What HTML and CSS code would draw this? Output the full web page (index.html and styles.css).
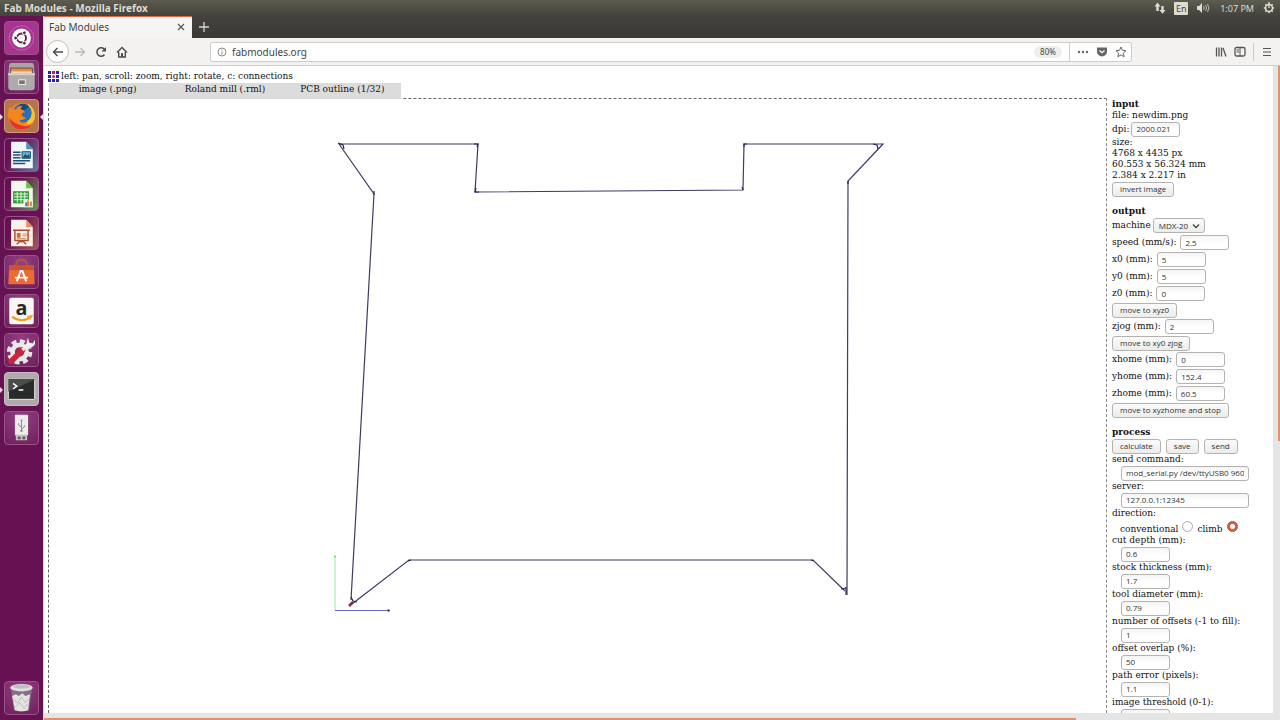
FILE: index.html
```html
<!DOCTYPE html>
<html lang="en">
<head>
<meta charset="utf-8">
<title>Fab Modules</title>
<link rel="stylesheet" href="styles.css">
</head>
<body>
<header class="panel">
  <span class="panel-title">Fab Modules - Mozilla Firefox</span>
  <div class="indicators">
    <svg width="12" height="12" viewBox="0 0 12 12" fill="#dfdbd2"><path d="M3.500 0.500 6.500 4.500H4.700V9H2.300V4.500H0.500zM8.500 11.800 5.500 8h1.800V4h2.400v4H11.500z"/></svg>
    <span class="lang">En</span>
    <svg width="14" height="12" viewBox="0 0 14 12" fill="#dfdbd2"><path d="M1 4h2l3-3v10L3 8H1z"/><path d="M7.500 4q1.500 2 0 4M9.500 3q2.200 3 0 6M11.500 2q2.800 4 0 8" fill="none" stroke="#bcb8b0"/></svg>
    <time class="clock">1:07 PM</time>
    <svg width="12" height="12" viewBox="0 0 12 12" fill="none" stroke="#dfdbd2"><circle cx="6" cy="6" r="3.500" stroke-width="1.500"/><path d="M6 0v6M0.800 6h2M9.200 6h2M2.300 2.300l1.400 1.400M9.700 2.300 8.300 3.700M2.300 9.700l1.400-1.400M9.700 9.700 8.300 8.300M6 9.300v2" stroke-width="1.400"/></svg>
  </div>
</header>
<div class="desktop">
  <nav class="launcher" aria-label="Launcher">
    <button class="tile dash" aria-label="Dash"><svg viewBox="0 0 34 34"><circle cx="17" cy="17" r="13" fill="none" stroke="#d694c9" opacity=".5"/><circle cx="17" cy="17" r="10" fill="#fff"/><circle cx="17" cy="17" r="4.800" fill="none" stroke="#5a1a4b" stroke-width="2"/><g fill="#5a1a4b" stroke="#fff"><circle cx="10.800" cy="17" r="2"/><circle cx="20" cy="11.500" r="2"/><circle cx="20" cy="22.500" r="2"/></g></svg></button>
    <button class="tile" aria-label="Files"><svg viewBox="0 0 34 34"><path d="M4 4q0-2 2-2h22q2 0 2 2l1 12H3z" fill="#aaa6a3"/><path d="M5 7h24v8H5z" fill="#5c4a40"/><path d="M6 8h22v6H6z" fill="#e58b4c"/><path d="M6 11h22v2H6z" fill="#f7d6b3"/><path d="M3 13h28v15q0 3-3 3H6q-3 0-3-3z" fill="#aeabaa"/><path d="M3 13h28v2H3z" fill="#d6d4d3"/><rect x="14" y="20" width="7" height="5" fill="#777" stroke="#f4f4f4"/></svg></button>
    <button class="tile firefox running focused" aria-label="Firefox"><svg viewBox="0 0 34 34"><circle cx="17" cy="17" r="14" fill="#f57c16"/><path d="M24 4q8 6 7 14-1 10-10 12l3-9z" fill="#ffd83b"/><circle cx="18" cy="14" r="10" fill="#2870b8"/><path d="M15 5q5-3 10 2l-5 4-5-2z" fill="#184783"/><path d="M4 7q-3 10 1 17 6 9 16 7 8-2 10-11-4 7-10 6-5-1-6-5 4 1 7-2-4-1-5-3 0-3 4-3-2-3-5-3 0-2 2-4-5 0-7 4-3-1-4 0-2-1-3-3" fill="#f5861d"/><path d="M4 19q1 9 10 12 10 1 14-5-5 3-11 1-8-2-13-8" fill="#e4332b"/><path d="M24 4q4 4 4 10-1 9-8 12 9-1 11-9 0-8-7-13" fill="#fbc12d"/></svg></button>
    <button class="tile doc" aria-label="Writer"><svg viewBox="0 0 34 34"><path d="M6 3h16l7 8v20H6z" fill="#f1f6f9"/><path d="M22 3v8h7z" fill="#4b92ba"/><path d="M8 14h8M8 17h8M8 20h8M8 23h18M8 26h13" stroke="#1e5275" stroke-width="1.600"/><path d="M17.500 13.500h9v7h-9z" fill="#6cb2d6" stroke="#174a70"/><path d="m18 20 3-4 2 2 2-2 1 4z" fill="#174a70"/></svg></button>
    <button class="tile sheet" aria-label="Calc"><svg viewBox="0 0 34 34"><path d="M6 3h16l7 8v20H6z" fill="#f3faed"/><path d="M22 3v8h7z" fill="#68c23b"/><path d="M8 14h17v13H8z" fill="#30a13a"/><path d="M9 17h15M9 20h15M9 23h15M12.500 15v11M16.500 15v11M20.500 15v11" stroke="#eafbe4"/><path d="M19 23h10v8H19z" fill="#eff4e8"/><path d="M21 30v-4h2v4z" fill="#367ab1"/><path d="M23 30v-6h2v6z" fill="#dc7c38"/><path d="M26 30v-5h2v5z" fill="#bd9038"/></svg></button>
    <button class="tile slides" aria-label="Impress"><svg viewBox="0 0 34 34"><path d="M6 3h16l7 8v20H6z" fill="#fbf1ea"/><path d="M22 3v8h7z" fill="#e39164"/><path d="M8 14h18M10 15v10h14V15M17 25v2M12 29l3-3h4l3 3" fill="none" stroke="#a74d2d" stroke-width="1.500"/><path d="M12 17h4v5h-4z" fill="#c86b3d"/><path d="M18 18h5M18 20h5M12 23h10" stroke="#da864a"/></svg></button>
    <button class="tile" aria-label="Software"><svg viewBox="0 0 34 34"><path d="M11 10q0-6 6-6t6 6" fill="none" stroke="#b4583a" stroke-width="2"/><path d="M4 10h26l1 20H3z" fill="#ed6a32"/><path d="M4 10h26v5H4z" fill="#c85332"/><path d="m12 27 4-11h2l4 11M10 23h14" fill="none" stroke="#fff" stroke-width="2"/></svg></button>
    <button class="tile" aria-label="Amazon"><svg viewBox="0 0 34 34"><rect x="4" y="3" width="26" height="28" rx="2" fill="#f8f7f5"/><text x="17" y="21" text-anchor="middle" class="amazon-letter">a</text><path d="M7 23q9 7 19 1" fill="none" stroke="#e7a124" stroke-width="2.200"/><path d="m23 23 5-1-2 4" fill="none" stroke="#e7a124" stroke-width="1.500"/></svg></button>
    <button class="tile" aria-label="Settings"><svg viewBox="0 0 34 34"><circle cx="15" cy="19" r="11" fill="none" stroke="#e7e3e4" stroke-width="5" stroke-dasharray="5 3.640"/><circle cx="15" cy="19" r="7.500" fill="#8b2a63" stroke="#ece9e9" stroke-width="5"/><path d="m6 29 12-12" stroke="#c9263d" stroke-width="6" stroke-linecap="round"/><path d="m18 17 6-6" stroke="#f1eff0" stroke-width="3.500"/><path d="M31 6q2 8-5 8-6-2-2-10l1 5 4 1z" fill="#f5f4f4"/></svg></button>
    <button class="tile terminal running" aria-label="Terminal"><svg viewBox="0 0 34 34"><rect x="3" y="6" width="28" height="22" rx="1" fill="#292b2b" stroke="#efefed"/><path d="m3 6h28v1L3 20z" fill="#4b4d4b"/><path d="m8 11 4 3-4 3M14 18h5" fill="none" stroke="#fff" stroke-width="1.600"/></svg></button>
    <button class="tile" aria-label="USB drive"><svg viewBox="0 0 34 34"><rect x="10" y="3" width="14" height="22" rx="1" fill="#eeecec"/><path d="M11 24h12v6H11z" fill="#c6c2c5"/><path d="M13 26h3v3h-3zM18 26h3v3h-3z" fill="#625a62"/><path d="M17 9v11M17 16l-3-2v-2M17 18l3-2v-2" fill="none" stroke="#8c878c"/><circle cx="17" cy="20" r="1.300" fill="#8c878c"/><circle cx="17" cy="9" r="1" fill="#8c878c"/></svg></button>
    <button class="tile trash" aria-label="Trash"><svg viewBox="0 0 34 34"><path d="m6 8 3 22q8 3 16 0l3-22z" fill="#856f84"/><path d="m7 15 4-2 3 2 4-3 3 3 5-2-2 17q-7 2-14 0z" fill="#e4e3e1"/><path d="m8 19 5 3 4-6 4 6 4-4M10 27l5-5 5 6 4-5" fill="none" stroke="#b9b6b7"/><ellipse cx="17" cy="6" rx="12" ry="4" fill="#e0dede"/><ellipse cx="17" cy="5" rx="9" ry="2" fill="#c2bfc3"/></svg></button>
  </nav>
  <div class="browser">
    <div class="tabstrip">
      <div class="tab"><span>Fab Modules</span><button class="plain" aria-label="Close tab"><svg width="8" height="8" viewBox="0 0 8 8" stroke="#555" stroke-width="1.200"><path d="m1 1 6 6M7 1 1 7"/></svg></button></div>
      <button class="plain new-tab" aria-label="New tab"><svg width="10" height="10" viewBox="0 0 10 10" stroke="#d8d7d3" stroke-width="1.300"><path d="M5 0v10M0 5h10"/></svg></button>
    </div>
    <div class="toolbar">
      <div class="nav-buttons">
        <button class="plain back" aria-label="Back"><svg width="12" height="12" viewBox="0 0 12 12" fill="none" stroke="#4c4c4c" stroke-width="1.400"><path d="M11 6H1.500M5.500 2l-4 4 4 4"/></svg></button>
        <button class="plain" aria-label="Forward"><svg width="12" height="12" viewBox="0 0 12 12" fill="none" stroke="#bab9b8" stroke-width="1.300"><path d="M1 6h9.500M6.500 2l4 4-4 4"/></svg></button>
        <button class="plain" aria-label="Reload"><svg width="12" height="12" viewBox="0 0 12 12" fill="none" stroke="#4c4c4c" stroke-width="1.500"><path d="M9.500 8.500A4.200 4.200 0 1 1 9.500 3.500"/><path d="M11 1v4.500H6.500z" fill="#4c4c4c" stroke="none"/></svg></button>
        <button class="plain" aria-label="Home"><svg width="12" height="12" viewBox="0 0 12 12" fill="none" stroke="#4c4c4c" stroke-width="1.400"><path d="m1 6.500 5-5 5 5M2.700 6v5h6.600V6"/><path d="M5.500 11V7.500h1V11" fill="#4c4c4c" stroke-width="1"/></svg></button>
      </div>
      <div class="urlbar">
        <svg width="10" height="10" viewBox="0 0 10 10" fill="none" stroke="#888"><circle cx="5" cy="5" r="4"/><path d="M5 4.500v3M5 2.500v1"/></svg>
        <input class="url" aria-label="Address" value="fabmodules.org">
        <button class="zoom">80%</button>
        <span class="rule"></span>
        <button class="plain" aria-label="Page actions"><svg width="12" height="12" viewBox="0 0 12 12" fill="#666"><circle cx="2" cy="6" r="1.200"/><circle cx="6" cy="6" r="1.200"/><circle cx="10" cy="6" r="1.200"/></svg></button>
        <button class="plain" aria-label="Pocket"><svg width="12" height="12" viewBox="0 0 12 12"><path d="M1 1.500h10v4a5 5 0 0 1-10 0z" fill="#666"/><path d="m3.500 4.500 2.500 2.300 2.500-2.300" fill="none" stroke="#fff" stroke-width="1.200"/></svg></button>
        <button class="plain" aria-label="Bookmark"><svg width="12" height="12" viewBox="0 0 12 12" fill="none" stroke="#666" stroke-linejoin="round"><path d="m6 1 1.500 3.300 3.500.4-2.600 2.400.7 3.600L6 8.900l-3.100 1.800.7-3.600L1 4.700l3.500-.4z"/></svg></button>
      </div>
      <div class="tools">
        <button class="plain" aria-label="Library"><svg width="12" height="12" viewBox="0 0 12 12" stroke="#555" stroke-width="1.300"><path d="M1.500 1.500v9M4 1.500v9M6.500 1.500v9M8 2l3 8.500"/></svg></button>
        <button class="plain" aria-label="Sidebars"><svg width="12" height="12" viewBox="0 0 12 12" fill="none" stroke="#555"><rect x="1" y="1.500" width="10" height="8.500" rx="1.500" stroke-width="1.300"/><path d="M6 2v8M2.500 4H5M2.500 6H5"/></svg></button>
        <span class="rule"></span>
        <button class="plain" aria-label="Menu"><svg width="12" height="12" viewBox="0 0 12 12" stroke="#555" stroke-width="1.200"><path d="M2 2.500h8M2 6h8M2 9.500h8"/></svg></button>
      </div>
    </div>
    <div class="viewport">
      <main class="page">
        <div class="hint"><svg width="11" height="11" viewBox="0 0 11 11"><path d="M0 0h3v3H0zM4 0h3v3H4zM8 0h3v3H8zM0 4h3v3H0zM8 4h3v3H8zM4 8h3v3H4zM8 8h3v3H8zM0 8h3v3H0z" fill="#2121c8"/><circle cx="5.500" cy="1.500" r="1.500" fill="#d02434"/><circle cx="5.500" cy="5.500" r="1.500" fill="#d02434"/></svg><span>left: pan, scroll: zoom, right: rotate, c: connections</span></div>
        <div class="stages"><span>image (.png)</span><span>Roland mill (.rml)</span><span>PCB outline (1/32)</span></div>
        <div class="work">
          <div class="canvas">
            <svg viewBox="49 99 1057 614" preserveAspectRatio="xMinYMin meet" fill="none">
              <path d="M339 144H478L475 192 743 190 744 144H883L848 181 847 595M845 591 813 560H409L352 604M351 600 374 194 339 144" stroke="#3f3b62" stroke-width="1.200"/>
              <path d="M338 143l5 2 1 4M474 144h4l-1 3M476 188l-1 4h4M742 187l1 3M744 147v-3h3M873 144l4 1 1 4M848 184v-3M841 589l5-1M846 587v8M811 560l3 1M411 560l-3 1M351 597l2 4 4 1M374 191v4" stroke="#2a254f" stroke-width="1.200"/>
              <path d="M349 606l4-4" stroke="#842943" stroke-width="2.500"/>
              <path d="M335 610v-54" stroke="#9beb9b"/><path d="M335 610.500h53" stroke="#6969b8"/>
              <circle cx="335" cy="556.500" r="1" fill="#65dc65"/><circle cx="388.500" cy="610.500" r="1.200" fill="#34348b"/>
            </svg>
          </div>
          <aside class="settings">
            <section>
              <h2>input</h2>
              <div>file: newdim.png</div>
              <div class="row tight"><label for="dpi">dpi:</label><input id="dpi" value="2000.021"></div>
              <div>size:</div><div>4768 x 4435 px</div><div>60.553 x 56.324 mm</div><div>2.384 x 2.217 in</div>
              <div class="row actions"><button>invert image</button></div>
            </section>
            <section class="output">
              <h2>output</h2>
              <div class="row tight"><label for="machine">machine</label><span class="select"><select id="machine"><option>MDX-20</option></select><svg width="8" height="6" viewBox="0 0 8 6" fill="none" stroke="#444" stroke-width="1.300"><path d="m1 1.500 3 3 3-3"/></svg></span></div>
              <div class="row"><label for="speed">speed (mm/s):</label><input id="speed" value="2.5"></div>
              <div class="row"><label for="x0">x0 (mm):</label><input id="x0" value="5"></div>
              <div class="row"><label for="y0">y0 (mm):</label><input id="y0" value="5"></div>
              <div class="row"><label for="z0">z0 (mm):</label><input id="z0" value="0"></div>
              <div class="row actions"><button>move to xyz0</button></div>
              <div class="row"><label for="zjog">zjog (mm):</label><input id="zjog" value="2"></div>
              <div class="row actions"><button>move to xy0 zjog</button></div>
              <div class="row"><label for="xhome">xhome (mm):</label><input id="xhome" value="0"></div>
              <div class="row"><label for="yhome">yhome (mm):</label><input id="yhome" value="152.4"></div>
              <div class="row"><label for="zhome">zhome (mm):</label><input id="zhome" value="60.5"></div>
              <div class="row actions"><button>move to xyzhome and stop</button></div>
            </section>
            <section class="process">
              <h2>process</h2>
              <div class="row actions"><button>calculate</button><button>save</button><button>send</button></div>
              <label for="cmd">send command:</label><div class="row"><input class="wide" id="cmd" value="mod_serial.py /dev/ttyUSB0 9600 dsrdtr"></div>
              <label for="server">server:</label><div class="row"><input class="wide" id="server" value="127.0.0.1:12345"></div>
              <div>direction:</div>
              <div class="row radios"><label for="conv">conventional</label><input type="radio" name="direction" id="conv"><label for="climb">climb</label><input type="radio" name="direction" id="climb" checked></div>
              <label for="depth">cut depth (mm):</label><div class="row"><input id="depth" value="0.6"></div>
              <label for="stock">stock thickness (mm):</label><div class="row"><input id="stock" value="1.7"></div>
              <label for="tool">tool diameter (mm):</label><div class="row"><input id="tool" value="0.79"></div>
              <label for="offsets">number of offsets (-1 to fill):</label><div class="row"><input id="offsets" value="1"></div>
              <label for="overlap">offset overlap (%):</label><div class="row"><input id="overlap" value="50"></div>
              <label for="error">path error (pixels):</label><div class="row"><input id="error" value="1.1"></div>
              <label for="threshold">image threshold (0-1):</label><div class="row"><input id="threshold" value=".5"></div>
            </section>
          </aside>
        </div>
      </main>
      <div class="scroll-y"></div>
      <div class="scroll-x"></div>
    </div>
  </div>
</div>
</body>
</html>
```
FILE: styles.css
```css
* { box-sizing: border-box; }
body { margin: 0; height: 100vh; display: flex; flex-direction: column; overflow: hidden; font-family: "Noto Sans", "Open Sans", sans-serif; font-size: 10px; color: #444; }
button, input, select { font: inherit; color: inherit; margin: 0; }
svg { display: block; flex: none; }
.plain { border: 0; padding: 0; background: none; display: grid; place-items: center; }

.panel { height: 16px; flex: none; display: flex; align-items: center; justify-content: space-between; padding: 0 5px 0 4px; color: #dfdbd2; background: linear-gradient(#5d5c50, #43423c); }
.panel-title { font-weight: bold; font-size: 10px; line-height: 14px; }
.indicators { display: flex; align-items: center; gap: 8px; }
.lang { background: #dfdbd2; color: #45443f; border-radius: 1px; width: 14px; height: 13px; line-height: 13px; font-size: 9px; text-align: center; }
.clock { font-size: 9px; margin: 0 1px 0 2px; }

.desktop { flex: 1; min-height: 0; display: flex; }
.launcher { width: 43px; flex: none; padding: 5px 0 5px 4px; display: flex; flex-direction: column; gap: 5px; background: #651152; }
.tile { position: relative; width: 35px; height: 34px; flex: none; padding: 0; border: 1px solid #985388; border-radius: 4px; background: radial-gradient(circle at 50% 20%, #924080, #701f5d); }
.tile svg { width: 100%; height: 100%; }
.dash { background: #a7358f; }
.firefox { background: #b4744e; border-color: #d39a78; }
.doc { background: linear-gradient(120deg, #651152 30%, #607da0); }
.sheet { background: linear-gradient(120deg, #651152 30%, #699950); }
.slides { background: linear-gradient(120deg, #651152 30%, #a75855); }
.terminal { background: #b1aaad; border-color: #c6bec4; }
.trash { margin-top: auto; }
.running::before, .focused::after { content: ""; position: absolute; top: 14px; border: 3px solid transparent; }
.running::before { left: -5px; border-left-color: #e7dce5; border-right: 0; }
.focused::after { right: -5px; border-right-color: #e7dce5; border-left: 0; }
.amazon-letter { font: bold 21px "Open Sans", sans-serif; fill: #292929; }

.browser { flex: 1; min-width: 0; display: flex; flex-direction: column; background: #f3f2f1; border-left: 1px solid #dcd4da; }
.tabstrip { height: 22px; flex: none; display: flex; background: linear-gradient(#43423c, #3a3934); }
.tab { width: 148px; display: flex; align-items: center; justify-content: space-between; padding: 0 7px 0 5px; background: #f5f5f4; border-top: 1px solid #df6745; line-height: 14px; padding-bottom: 1px; }
.new-tab { width: 24px; }
.toolbar { height: 28px; flex: none; display: flex; align-items: center; border-bottom: 1px solid #d0cecc; }
.nav-buttons { display: flex; align-items: center; padding-left: 2px; width: 166px; }
.nav-buttons .plain { width: 21px; }
.nav-buttons .back { width: 23px; height: 23px; border: 1px solid #c3c1c0; border-radius: 50%; background: #fbfbfb; }
.urlbar { flex: 1; height: 20px; display: flex; align-items: center; gap: 7px; padding: 0 4px 0 6px; background: #fff; border: 1px solid #cfcdca; border-radius: 2px; }
.url { flex: 1; min-width: 0; border: 0; padding: 0; margin-left: -2px; background: none; outline: 0; }
.zoom { border: 0; border-radius: 6px; background: #eeeeed; height: 12px; width: 28px; padding: 0; font-size: 8px; line-height: 12px; }
.rule { width: 1px; height: 18px; background: #cfcdca; }
.tools { width: 148px; display: flex; align-items: center; justify-content: flex-end; gap: 7px; padding-right: 7px; }

.viewport { flex: 1; min-height: 0; display: grid; grid-template: minmax(0, 1fr) 7px / minmax(0, 1fr) 7px; background: #e5e5e5; }
.scroll-y { background: linear-gradient(#e4906b, #e4906b) right top / 2px 58% no-repeat; }
.scroll-x { grid-area: 2 / 1 / 3 / 3; background: linear-gradient(#e4906b, #e4906b) left bottom / 83.500% 2px no-repeat; }
.page { background: #fff; overflow: hidden; padding: 4px 0 0 4px; display: flex; flex-direction: column; font: 9px/11px "DejaVu Serif", serif; color: #111; }
.hint { display: flex; align-items: center; gap: 2px; height: 13px; }
.stages { position: relative; z-index: 1; width: 352px; height: 16px; margin: 0 0 -1px 1px; display: grid; grid-template-columns: repeat(3, 1fr); text-align: center; line-height: 12px; background: #dcdcdc; }
.work { flex: 1; min-height: 0; display: flex; align-items: stretch; }
.canvas { flex: 1; min-width: 0; border: 1px dashed #666; border-bottom: 0; border-right-color: #888; }
.canvas svg { width: 100%; height: 100%; }
.settings { width: 166px; flex: none; padding: 1px 0 0 5px; }
.settings h2 { margin: 0; font-size: 9px; line-height: 11px; }
.settings label { display: block; }
.output, .process { padding-top: 9px; }
.row { height: 16px; display: flex; align-items: center; gap: 4px; }
.output .row:not(.actions) { height: 17px; }
.row.tight { gap: 2px; }
.row input:not([type]), .row button, .row select { font-family: "Open Sans", sans-serif; font-size: 8px; line-height: 11px; height: 15px; color: #333; border: 1px solid #b5b3b0; border-radius: 3px; }
.row input:not([type]) { width: 49px; padding: 0 4px 1px; background: linear-gradient(#f4f4f4, #fff 50%); }
.row input.wide { width: 128px; }
.process .row input:not([type]) { margin-left: 9px; }
.row button { padding: 0 7px 1px; background: linear-gradient(#fbfbfb, #ececeb); }
.row.actions { gap: 5px; }
.select { position: relative; }
.select select { display: block; appearance: none; width: 52px; padding: 0 0 1px 5px; background: linear-gradient(#fbfbfb, #ececeb); }
.select svg { position: absolute; right: 5px; top: 5px; pointer-events: none; }
.row.radios { padding-left: 8px; align-items: flex-start; }
.radios label { line-height: 21px; }
.radios input { appearance: none; width: 11px; height: 11px; margin-top: 2px; border: 1px solid #aaa; border-radius: 50%; background: #fff; }
.radios input:checked { border-color: #b65232; background: radial-gradient(#fff 0 2px, #d65f39 3px); }
```
